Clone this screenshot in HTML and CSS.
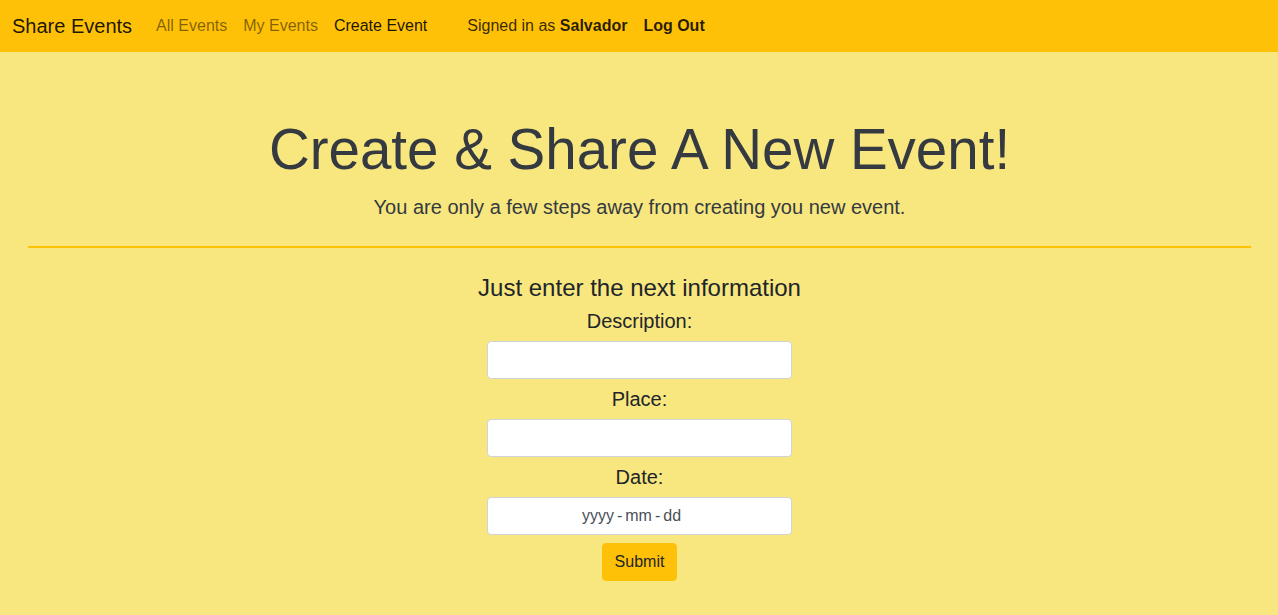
FILE: index.html
```html
<!DOCTYPE html>
<html lang="en">
<head>
<meta charset="utf-8">
<title>Share Events</title>
<link rel="stylesheet" href="styles.css">
</head>
<body>
<nav class="navbar">
  <a class="brand" href="#">Share Events</a>
  <ul class="nav">
    <li><a class="nav-link" href="#">All Events</a></li>
    <li><a class="nav-link" href="#">My Events</a></li>
    <li><a class="nav-link active" href="#">Create Event</a></li>
  </ul>
  <span class="signed">Signed in as <b>Salvador</b></span>
  <a class="logout" href="#">Log Out</a>
</nav>
<main class="main">
  <header class="hero">
    <h1 class="title">Create &amp; Share A New Event!</h1>
    <p class="lead">You are only a few steps away from creating you new event.</p>
  </header>
  <hr class="divider">
  <form class="form">
    <h4 class="form-title">Just enter the next information</h4>
    <label class="label" for="desc">Description:</label>
    <input class="input" id="desc" type="text">
    <label class="label" for="place">Place:</label>
    <input class="input" id="place" type="text">
    <label class="label" for="date">Date:</label>
    <div class="input date-input" id="date">yyyy<span class="sep">-</span>mm<span class="sep">-</span>dd</div>
    <button class="btn" type="button">Submit</button>
  </form>
</main>
</body>
</html>
```
FILE: styles.css
```css
* { box-sizing: border-box; }
html, body { margin: 0; padding: 0; }
body {
  background: #f8e67f;
  font-family: "Liberation Sans", Arial, sans-serif;
  color: #212529;
  min-height: 615px;
}
a { text-decoration: none; }
.navbar {
  height: 52px;
  background: #ffc107;
  display: flex;
  align-items: center;
  padding: 0 12px;
}
.brand {
  font-size: 20px;
  color: rgba(0,0,0,0.9);
  margin-right: 16px;
}
.nav {
  list-style: none;
  margin: 0;
  padding: 0;
  display: flex;
}
.nav-link {
  display: block;
  padding: 0 8px;
  font-size: 16px;
  color: rgba(0,0,0,0.5);
}
.nav-link.active { color: rgba(0,0,0,0.9); }
.signed {
  margin-left: 32px;
  font-size: 16px;
  color: rgba(0,0,0,0.8);
}
.signed b { color: rgba(0,0,0,0.85); }
.logout {
  margin-left: 16px;
  font-size: 16px;
  font-weight: bold;
  color: rgba(0,0,0,0.85);
}
.main {
  padding: 0 27px 0 28px;
}
.hero {
  text-align: center;
  padding-top: 64px;
}
.title {
  margin: 0;
  font-size: 56.5px;
  font-weight: 300;
  line-height: 67px;
  color: #343a40;
}
.lead {
  margin: 9px 0 0;
  font-size: 20px;
  font-weight: 300;
  line-height: 30px;
  color: #343a40;
}
.divider {
  margin: 24px 0 0;
  border: 0;
  border-top: 2px solid #ffc107;
}
.form {
  display: flex;
  flex-direction: column;
  align-items: center;
  padding-top: 25px;
}
.form-title {
  margin: 0 0 4px;
  font-size: 24px;
  font-weight: 500;
  line-height: 29px;
}
.label {
  font-size: 20px;
  line-height: 30px;
  margin-bottom: 5px;
}
.input {
  width: 305px;
  height: 38px;
  background: #fff;
  border: 1px solid #ced4da;
  border-radius: 4px;
  margin: 0 0 5px;
  font-family: inherit;
  font-size: 16px;
}
.date-input {
  display: flex;
  align-items: center;
  justify-content: center;
  color: #495057;
  margin-bottom: 8px;
  padding-right: 16px;
}
.sep { margin: 0 3px; }
.btn {
  width: 75px;
  height: 38px;
  background: #ffc107;
  border: 1px solid #ffc107;
  border-radius: 4px;
  font-family: inherit;
  font-size: 16px;
  color: #212529;
  padding: 0;
}
```
